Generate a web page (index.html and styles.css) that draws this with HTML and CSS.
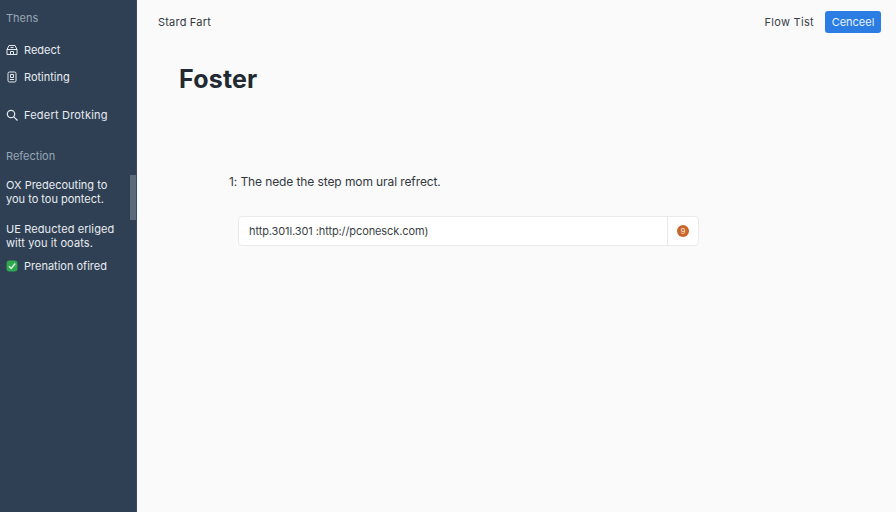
FILE: index.html
```html
<!DOCTYPE html>
<html lang="en">
<head>
<meta charset="utf-8">
<title>Foster</title>
<link rel="stylesheet" href="styles.css">
</head>
<body>
<div class="app">
  <aside class="sidebar">
    <div class="scrollthumb"></div>
    <div class="label label-top">Thens</div>
    <div class="nav-item first">
      <svg class="ico" viewBox="0 0 12 12" fill="none" stroke="#e4e9ee" stroke-width="1"><path d="M1 5.500 3 1.500h6l2 4v5H1z"/><path d="M1 5.500h10M4.500 3.500h3M4.500 7.500h3v3h-3z"/></svg>
      <span>Redect</span>
    </div>
    <div class="nav-item second">
      <svg class="ico" viewBox="0 0 12 12" fill="none" stroke="#e4e9ee" stroke-width="1"><rect x="2" y="1" width="8" height="10" rx="1.500"/><path d="M4.500 3.500h3v3h-3zM4 8.500h4"/></svg>
      <span>Rotinting</span>
    </div>
    <div class="nav-item third">
      <svg class="ico" viewBox="0 0 12 12" fill="none" stroke="#e4e9ee" stroke-width="1.200"><circle cx="5" cy="5" r="3.700"/><path d="M7.800 7.800 11.500 11.500"/></svg>
      <span>Federt Drotking</span>
    </div>
    <div class="label label-mid">Refection</div>
    <p class="para para-a">OX Predecouting to<br>you to tou pontect.</p>
    <p class="para para-b">UE Reducted erliged<br>witt you it ooats.</p>
    <div class="nav-item status">
      <svg class="ico-check" viewBox="0 0 12 12"><rect x="0.500" y="0.500" width="11" height="11" rx="3" fill="#2fa84f"/><path d="M3 6.300 5.200 8.500 9.200 3.500" fill="none" stroke="#dff5e4" stroke-width="1.500"/></svg>
      <span>Prenation ofired</span>
    </div>
  </aside>
  <main class="main">
    <header class="topbar">
      <span class="crumb">Stard Fart</span>
      <div class="actions">
        <span class="flow">Flow Tist</span>
        <button class="btn" type="button">Cenceel</button>
      </div>
    </header>
    <h1 class="title">Foster</h1>
    <p class="step">1: The nede the step mom ural refrect.</p>
    <div class="urlbox">
      <div class="urltext">http.301l.301 :http://pconesck.com)</div>
      <div class="urlside"><span class="dot">9</span></div>
    </div>
  </main>
</div>
</body>
</html>
```

FILE: styles.css
```css
* { box-sizing: border-box; }
html, body { margin: 0; height: 100%; }
body { font-family: "Inter", "Liberation Sans", sans-serif; overflow: hidden; background: #fafafa; }
.app { display: flex; width: 896px; height: 512px; }

.sidebar {
  position: relative;
  width: 137px;
  flex: none;
  padding: 11px 0 0 6px;
  background: #2f4055;
  color: #e8ecf0;
  font-size: 11px;
  border-right: 1px solid #3b4a5c;
}
.scrollthumb {
  position: absolute;
  right: 0;
  top: 175px;
  width: 6px;
  height: 45px;
  background: #5c6b7c;
}
.label { color: #97a5b4; font-size: 11px; line-height: 14px; }
.label-mid { margin-top: 27px; }
.nav-item { display: flex; align-items: center; gap: 6px; line-height: 14px; white-space: nowrap; }
.first { margin-top: 18px; }
.second { margin-top: 13px; }
.third { margin-top: 24px; letter-spacing: 0.2px; }
.ico { width: 12px; height: 12px; flex: none; }
.ico-check { width: 12px; height: 12px; flex: none; }
.para { margin: 0; font-size: 11px; line-height: 14px; color: #e8ecf0; white-space: nowrap; }
.para-a { margin-top: 15px; }
.para-b { margin-top: 16px; letter-spacing: 0.1px; }
.status { margin-top: 9px; }

.main { flex: 1; min-width: 0; display: flex; flex-direction: column; padding: 10px 15px 0 21px; background: #fafafa; }
.topbar { display: flex; justify-content: space-between; align-items: center; height: 23px; }
.crumb { font-size: 11px; letter-spacing: 0.2px; color: #33383f; }
.actions { display: flex; align-items: center; gap: 11px; }
.flow { font-size: 11px; letter-spacing: 0.3px; color: #3a4048; }
.btn {
  width: 56px;
  height: 22px;
  padding: 0;
  border: none;
  border-radius: 3px;
  background: #2b7de3;
  color: #e8f1fc;
  font: 11px "Inter", "Liberation Sans", sans-serif;
}
.title { margin: 32px 0 0 21px; font-size: 25px; line-height: 28px; letter-spacing: 0.2px; font-weight: 700; color: #222932; }
.step { margin: 81px 0 0 71px; font-size: 12px; line-height: 16px; letter-spacing: -0.1px; color: #33383f; }
.urlbox {
  display: flex;
  width: 461px;
  height: 30px;
  margin: 26px 0 0 80px;
  background: #fff;
  border: 1px solid #e9eaec;
  border-radius: 4px;
}
.urltext { flex: 1; padding-left: 10px; font-size: 11px; line-height: 28px; letter-spacing: -0.1px; color: #3a3f46; white-space: nowrap; }
.urlside { width: 31px; display: flex; align-items: center; justify-content: center; border-left: 1px solid #e9eaec; }
.dot {
  width: 12px;
  height: 12px;
  border-radius: 50%;
  background: #c9652a;
  color: #f6e4d4;
  font-size: 8px;
  line-height: 12px;
  text-align: center;
}
```
